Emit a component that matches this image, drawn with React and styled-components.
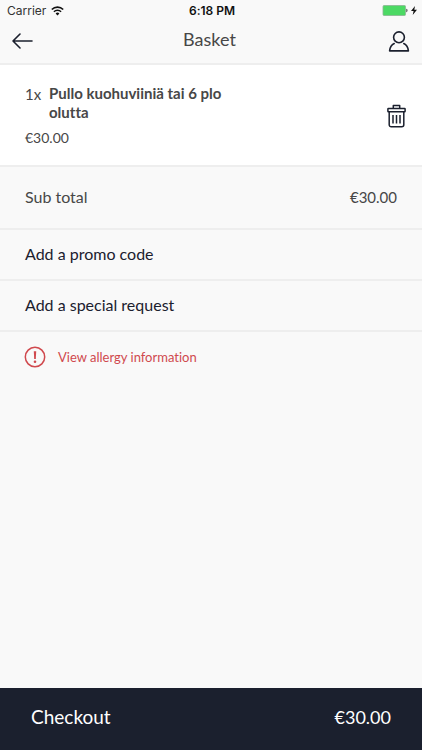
import React from "react";
import styled, { createGlobalStyle } from "styled-components";

const GlobalStyle = createGlobalStyle`
  *, *::before, *::after { box-sizing: border-box; }
  body { margin: 0; background: #f9f9f9; }
  button, h1, h2, p { margin: 0; padding: 0; font: inherit; color: inherit; }
  button { border: 0; background: none; cursor: pointer; text-align: left; }
`;

const Screen = styled.div`
  display: flex;
  flex-direction: column;
  min-height: 100vh;
  background: #f9f9f9;
  color: #474747;
  font-family: Lato, "Open Sans", sans-serif;
  font-size: 16px;
  line-height: 20px;
  font-variant-ligatures: none;
`;

const Header = styled.header`
  background: #f9f9f9;
  border-bottom: 2px solid #eeeeee;
`;

const StatusBar = styled.div`
  display: grid;
  grid-template-columns: 1fr auto 1fr;
  align-items: center;
  height: 21px;
  padding: 0 5px 0 7px;
  font-family: Inter, sans-serif;
  font-size: 12px;
  line-height: 20px;
  color: #333333;
`;

const StatusGroup = styled.div`
  display: flex;
  align-items: center;
  gap: ${({ $gap }) => $gap}px;
  justify-content: ${({ $end }) => ($end ? "flex-end" : "flex-start")};
`;

const Clock = styled.time`
  font-weight: 600;
  color: #111111;
`;

const NavBar = styled.nav`
  display: grid;
  grid-template-columns: 1fr auto 1fr;
  align-items: center;
  height: 42px;
  padding: 0 12px 2px;
`;

const Title = styled.h1`
  && {
    font-size: 18px;
    font-weight: 400;
    line-height: 24px;
    padding: 0 3px 4px 0;
  }
`;

const IconButton = styled.button`
  display: flex;
  color: #1b202e;
  justify-self: ${({ $end }) => ($end ? "end" : "start")};
`;

const Item = styled.section`
  display: flex;
  align-items: center;
  justify-content: space-between;
  padding: 19px 16px 17px 25px;
  background: #ffffff;
  border-bottom: 2px solid #eeeeee;
`;

const ItemDetails = styled.div`
  display: grid;
  grid-template-columns: 24px 190px;
`;

const Quantity = styled.span`
  font-size: 15px;
  line-height: 20px;
`;

const ItemName = styled.h2`
  && {
    font-size: 15px;
    font-weight: 700;
    line-height: 19px;
  }
`;

const ItemPrice = styled.p`
  && {
    grid-column: 1 / -1;
    padding-top: 6px;
    font-size: 14px;
    line-height: 20px;
  }
`;

const SubTotal = styled.div`
  display: flex;
  align-items: center;
  justify-content: space-between;
  height: 63px;
  padding: 0 25px 2px;
  border-bottom: 2px solid #eeeeee;
`;

const SubTotalPrice = styled.span`
  font-size: 15px;
`;

const OptionRow = styled.button`
  && {
    height: 51px;
    padding: 0 25px 2px;
    border-bottom: 2px solid #eeeeee;
    color: #1b202e;
  }
`;

const AllergyLink = styled.a`
  display: flex;
  align-items: center;
  align-self: flex-start;
  gap: 12px;
  padding: 14px 24px;
  color: #d0494e;
  font-size: 13px;
  text-decoration: none;
`;

const CheckoutBar = styled.button`
  && {
    display: flex;
    justify-content: space-between;
    align-items: center;
    height: 62px;
    margin-top: auto;
    padding: 0 31px 4px;
    background: #1b202e;
    color: #ffffff;
    font-size: 19px;
  }
`;

const CheckoutPrice = styled.span`
  font-size: 18px;
`;

const WifiIcon = () => (
  <svg width="13" height="10" viewBox="0 0 13 10" fill="none" stroke="#111" aria-hidden="true">
    <path d="M.8 3.5a8.1 8.1 0 0 1 11.4 0" strokeWidth="1.7" />
    <path d="M2.9 5.7a5.1 5.1 0 0 1 7.2 0" strokeWidth="1.5" />
    <path d="M4.6 7.5a2.7 2.7 0 0 1 3.8 0L6.5 9.4z" fill="#111" stroke="none" />
  </svg>
);

const BatteryIcon = () => (
  <svg width="26" height="11" viewBox="0 0 26 11" aria-hidden="true">
    <rect x="1" y=".5" width="22.5" height="10" rx="1" fill="#4cd964" stroke="#8cb492" strokeWidth=".8" />
    <path d="M24.4 3.8c1.4.2 1.4 3.2 0 3.4z" fill="#333" />
  </svg>
);

const BoltIcon = () => (
  <svg width="6" height="9" viewBox="0 0 6 9" aria-hidden="true">
    <path d="M4 0 0 5h2.6L1.7 9 6 3.7H3.3z" fill="#111" />
  </svg>
);

const BackIcon = () => (
  <svg width="21" height="16" viewBox="0 0 21 16" fill="none" stroke="currentColor" strokeWidth="1.6" strokeLinecap="round" strokeLinejoin="round" aria-hidden="true">
    <path d="M8 1 1 8l7 7M1 8h19" />
  </svg>
);

const PersonIcon = () => (
  <svg width="22" height="22" viewBox="0 0 22 22" fill="none" stroke="currentColor" strokeWidth="1.6" strokeLinecap="round" strokeLinejoin="round" aria-hidden="true">
    <circle cx="11" cy="7.3" r="5.4" />
    <path d="M6.2 13.6c-2.6 1.2-4.2 3.8-4.6 7.3h18.8c-.4-3.5-2-6.1-4.6-7.3" />
  </svg>
);

const TrashIcon = () => (
  <svg width="19" height="24" viewBox="0 0 19 24" fill="none" stroke="currentColor" strokeWidth="1.5" strokeLinejoin="round" aria-hidden="true">
    <path d="M6.3 4.5V1.4h6.4v3.1" />
    <rect x=".9" y="4.5" width="17.2" height="3.2" rx=".5" />
    <path d="M2.2 7.7v13.1a2 2 0 0 0 2 2h10.6a2 2 0 0 0 2-2V7.7" />
    <path d="M6 11v8.4M9.5 11v8.4M13 11v8.4" />
  </svg>
);

const AlertIcon = () => (
  <svg width="22" height="22" viewBox="0 0 22 22" fill="none" stroke="currentColor" aria-hidden="true">
    <circle cx="11" cy="11" r="9.7" strokeWidth="1.5" />
    <path d="M9.8 5.3h2.4l-.4 7.8h-1.6z" fill="currentColor" stroke="none" />
    <circle cx="11" cy="15.7" r="1.3" fill="currentColor" stroke="none" />
  </svg>
);

const options = ["Add a promo code", "Add a special request"];

export default function App() {
  return (
    <Screen>
      <GlobalStyle />
      <Header>
        <StatusBar>
          <StatusGroup $gap={5}>
            <span>Carrier</span>
            <WifiIcon />
          </StatusGroup>
          <Clock>6:18 PM</Clock>
          <StatusGroup $gap={3} $end>
            <BatteryIcon />
            <BoltIcon />
          </StatusGroup>
        </StatusBar>
        <NavBar>
          <IconButton aria-label="Back">
            <BackIcon />
          </IconButton>
          <Title>Basket</Title>
          <IconButton $end aria-label="Account">
            <PersonIcon />
          </IconButton>
        </NavBar>
      </Header>
      <Item>
        <ItemDetails>
          <Quantity>1x</Quantity>
          <ItemName>Pullo kuohuviiniä tai 6 plo olutta</ItemName>
          <ItemPrice>€30.00</ItemPrice>
        </ItemDetails>
        <IconButton aria-label="Remove item">
          <TrashIcon />
        </IconButton>
      </Item>
      <SubTotal>
        <span>Sub total</span>
        <SubTotalPrice>€30.00</SubTotalPrice>
      </SubTotal>
      {options.map((label) => (
        <OptionRow key={label}>{label}</OptionRow>
      ))}
      <AllergyLink href="#allergy">
        <AlertIcon />
        View allergy information
      </AllergyLink>
      <CheckoutBar>
        <span>Checkout</span>
        <CheckoutPrice>€30.00</CheckoutPrice>
      </CheckoutBar>
    </Screen>
  );
}
